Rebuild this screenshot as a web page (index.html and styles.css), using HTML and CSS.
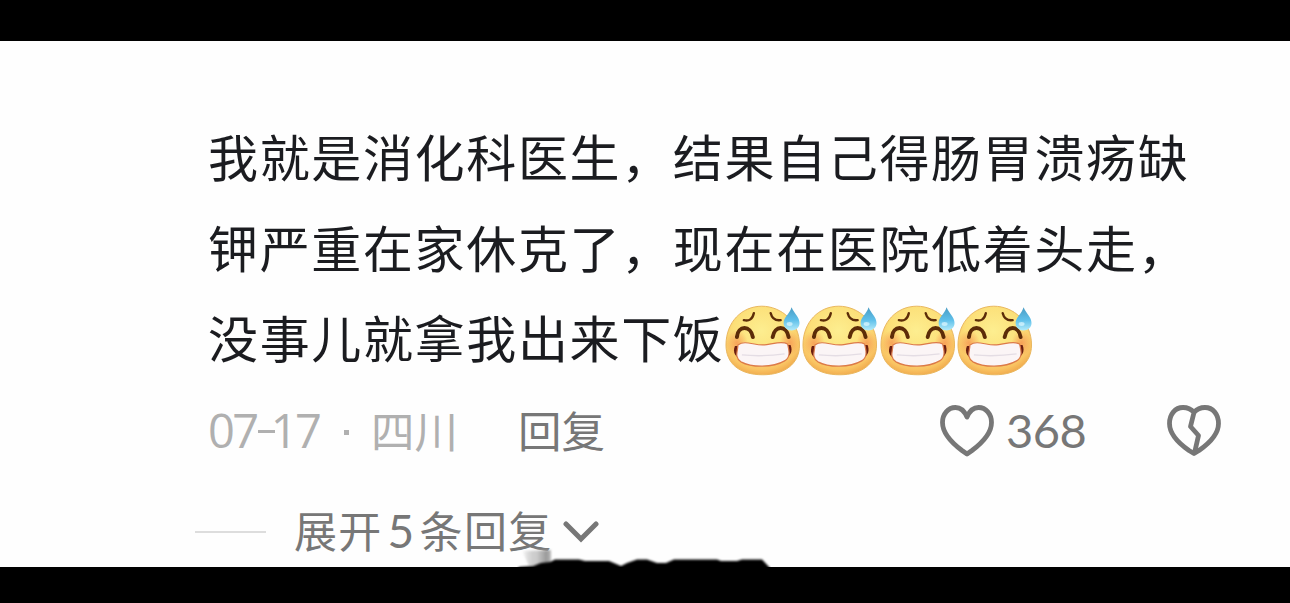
FILE: index.html
```html
<!doctype html>
<html lang="zh-CN">
    <head>
        <title>评论</title>
        <meta charset="utf-8">
        <link rel="stylesheet" href="styles.css">
    </head>

    <body>
        <!-- shared icons -->
        <svg class="defs" width="0" height="0">
            <defs>
                <radialGradient id="face" cx="48%" cy="36%" r="64%">
                    <stop offset="0" stop-color="#fdee90"/>
                    <stop offset=".6" stop-color="#fcdf78"/>
                    <stop offset=".88" stop-color="#f9c463"/>
                    <stop offset="1" stop-color="#f2ae50"/>
                </radialGradient>
                <radialGradient id="cheek">
                    <stop offset="0" stop-color="#f58a4c" stop-opacity=".7"/>
                    <stop offset="1" stop-color="#f58a4c" stop-opacity="0"/>
                </radialGradient>
                <linearGradient id="drop" x1="0" y1="0" x2="0" y2="1">
                    <stop offset="0" stop-color="#4a9cc4"/>
                    <stop offset=".55" stop-color="#5fc0ea"/>
                    <stop offset="1" stop-color="#b4ebfa"/>
                </linearGradient>
                <symbol id="sweat" viewBox="0 0 78 74">
                    <path d="M37 3C57 3 75 19 75 42C75 61 60 72 38 72C15 72 1 61 1 42C1 19 17 3 37 3Z" fill="url(#face)" stroke="#e9b65e" stroke-width="1"/>
                    <ellipse cx="12" cy="40" rx="11" ry="13" fill="url(#cheek)"/>
                    <ellipse cx="65" cy="40" rx="10" ry="13" fill="url(#cheek)"/>
                    <g fill="none" stroke="#5c2c08" stroke-linecap="round">
                        <path d="M19 17Q27 19 29 10M46 10Q48 18 56 17" stroke-width="2.4"/>
                        <path d="M12 34C13 22 26 22 28 34M48 34C50 22 62 22 64 34" stroke-width="4"/>
                    </g>
                    <path d="M10 43C8 48 9 53 14 55L62 55C67 52 68 47 66 42Z" fill="#6b1e10"/>
                    <path d="M13 42C20 37 28 42 38 42C47 42 56 37 63 41C64 46 67 54 60 58C48 65 27 65 16 59C9 54 13 48 13 42Z" fill="#fbf5f6" stroke="#dc7a48" stroke-width="1.2"/>
                    <path d="M17 52Q38 54 60 51" fill="none" stroke="#e4dde4" stroke-width="1.4"/>
                    <path d="M67 4C70 11 75 14 75 20C75 30 59 30 59 20C59 14 65 11 67 4Z" fill="url(#drop)"/>
                    <ellipse cx="65" cy="21" rx="3" ry="2" fill="#e1f8ff" opacity=".7"/>
                </symbol>
            </defs>
        </svg>

        <div class="comment">
            <p class="text">我就是消化科医生，结果自己得肠胃溃疡缺<br>钾严重在家休克了，现在在医院低着头走，<br>没事儿就拿我出来下饭<span class="emojis"><svg><use href="#sweat"/></svg><svg><use href="#sweat"/></svg><svg><use href="#sweat"/></svg><svg><use href="#sweat"/></svg></span></p>

            <div class="meta">
                <span class="date">07<i class="dash"></i>17</span>
                <span class="dot"></span>
                <span class="place">四川</span>
                <a class="reply">回复</a>
                <span class="likes">
                    <svg class="heart" viewBox="0 0 54 52"><path d="M27 12C24 5 20 2.500 15.500 2.500C8 2.500 2.500 9 2.500 17.500C2.500 28 12 38 22 45.500L27 49L32 45.500C42 38 51.500 28 51.500 17.500C51.500 9 46 2.500 38.500 2.500C34 2.500 30 5 27 12Z"/></svg>
                    <span class="count">368</span>
                </span>
                <svg class="heart" viewBox="0 0 54 52"><path d="M27 7.500C24 4 20 2.500 16 2.500C8 2.500 2.500 9.500 2.500 18.500C2.500 29 12 38.500 22 45.500L27 48.500L32 45.500C42 38.500 51.500 29 51.500 18.500C51.500 9.500 46 2.500 38 2.500C34 2.500 30 4 27 7.500L23.500 21.500L31.500 30.500L27.500 48"/></svg>
            </div>

            <div class="more">
                <span class="line"></span>
                <span class="expand">展开<b>5</b>条回复</span>
                <svg class="chevron" viewBox="0 0 36 22"><path d="M3 3L18 18L33 3"/></svg>
            </div>

            <!-- rough edge above the bottom bar -->
            <svg class="smudge" viewBox="0 0 254 24">
                <defs>
                    <filter id="soft" x="-10%" y="-30%" width="120%" height="160%"><feGaussianBlur stdDeviation="1"/></filter>
                    <linearGradient id="fade" x1="0" y1="0" x2="1" y2="0">
                        <stop offset="0" stop-color="#999" stop-opacity="0"/>
                        <stop offset=".5" stop-color="#ccc"/>
                        <stop offset=".85" stop-color="#999"/>
                        <stop offset="1" stop-color="#bbb"/>
                    </linearGradient>
                </defs>
                <path d="M5 5L34 4L34 20L12 20Z" fill="url(#fade)" filter="url(#soft)"/>
                <path d="M0 24L2 21L16 20L24 17L33 16L38 13.500L62 13.500L68 15L92 15L104 20L110 17L120 13.500H130L140 17H149L157 13.500H200L204 15H220L225 13.500H245L253 22V24Z" filter="url(#soft)"/>
            </svg>
        </div>
    </body>
</html>
```
FILE: styles.css
```css
* {
    box-sizing: border-box;
}

body {
    margin: 0;
    height: 603px;
    padding: 41px 0 36px;
    overflow: hidden;
    background: black;
    font-family: 'Noto Sans CJK SC', sans-serif;
}

svg {
    display: block;
    flex: none;
}

.defs {
    position: absolute;
}

.comment {
    position: relative;
    height: 526px;
    padding: 69px 69px 0 208px;
    background: #fefefe;
}

.text {
    margin: 0;
    height: 272px;
    color: #1b1c20;
    font-size: 50px;
    line-height: 90.5px;
    letter-spacing: 1.65px;
    white-space: nowrap;
}

.emojis {
    display: inline-flex;
    margin-top: -8px;
    vertical-align: middle;
}

.emojis svg {
    width: 77.5px;
    height: 74px;
}

.meta {
    display: flex;
    align-items: center;
    height: 60px;
    margin-top: 20px;
    color: #b0b0b0;
    font-size: 43.5px;
    line-height: 60px;
}

.date, .place, .reply, .count {
    position: relative;
    top: -2px;
}

.date {
    width: 112px;
    font-family: 'Open Sans', sans-serif;
    font-size: 47px;
    letter-spacing: -2.5px;
    white-space: nowrap;
}

.dash {
    display: inline-block;
    width: 17px;
    height: 3.5px;
    margin: 0 -4px 0 1px;
    background: #b0b0b0;
    vertical-align: 15px;
}

.dot {
    width: 5px;
    height: 5px;
    margin: 0 22px 0 24px;
    background: #b0b0b0;
}

.place {
    width: 147px;
}

.reply {
    color: #777;
}

.likes {
    display: flex;
    align-items: center;
    gap: 12px;
    margin-left: auto;
    margin-right: 80px;
    color: #777;
}

.count {
    width: 81px;
    font-family: Lato, sans-serif;
    font-size: 47px;
    letter-spacing: -.5px;
}

.heart {
    width: 54px;
    height: 52px;
    margin-top: -3px;
    fill: none;
    stroke: #777;
    stroke-width: 4.8;
    stroke-linejoin: round;
}

.more {
    display: flex;
    align-items: center;
    height: 60px;
    margin: 40px 0 0 -13px;
    color: #777;
    font-size: 43px;
    line-height: 60px;
}

.line {
    width: 71px;
    height: 2px;
    margin-right: 28px;
    background: #ddd;
}

.expand {
    position: relative;
    top: -2px;
    width: 257px;
    letter-spacing: 1.3px;
    white-space: nowrap;
}

.expand b {
    margin: 0 4px 0 5px;
    font-family: Lato, sans-serif;
    font-size: 46px;
    font-weight: normal;
}

.chevron {
    width: 36px;
    height: 22px;
    margin-left: 12px;
    fill: none;
    stroke: #777;
    stroke-width: 5;
    stroke-linecap: round;
}

/* sits over the end of the last row */
.smudge {
    position: absolute;
    left: 517px;
    bottom: -3px;
    width: 254px;
    height: 24px;
}
```
